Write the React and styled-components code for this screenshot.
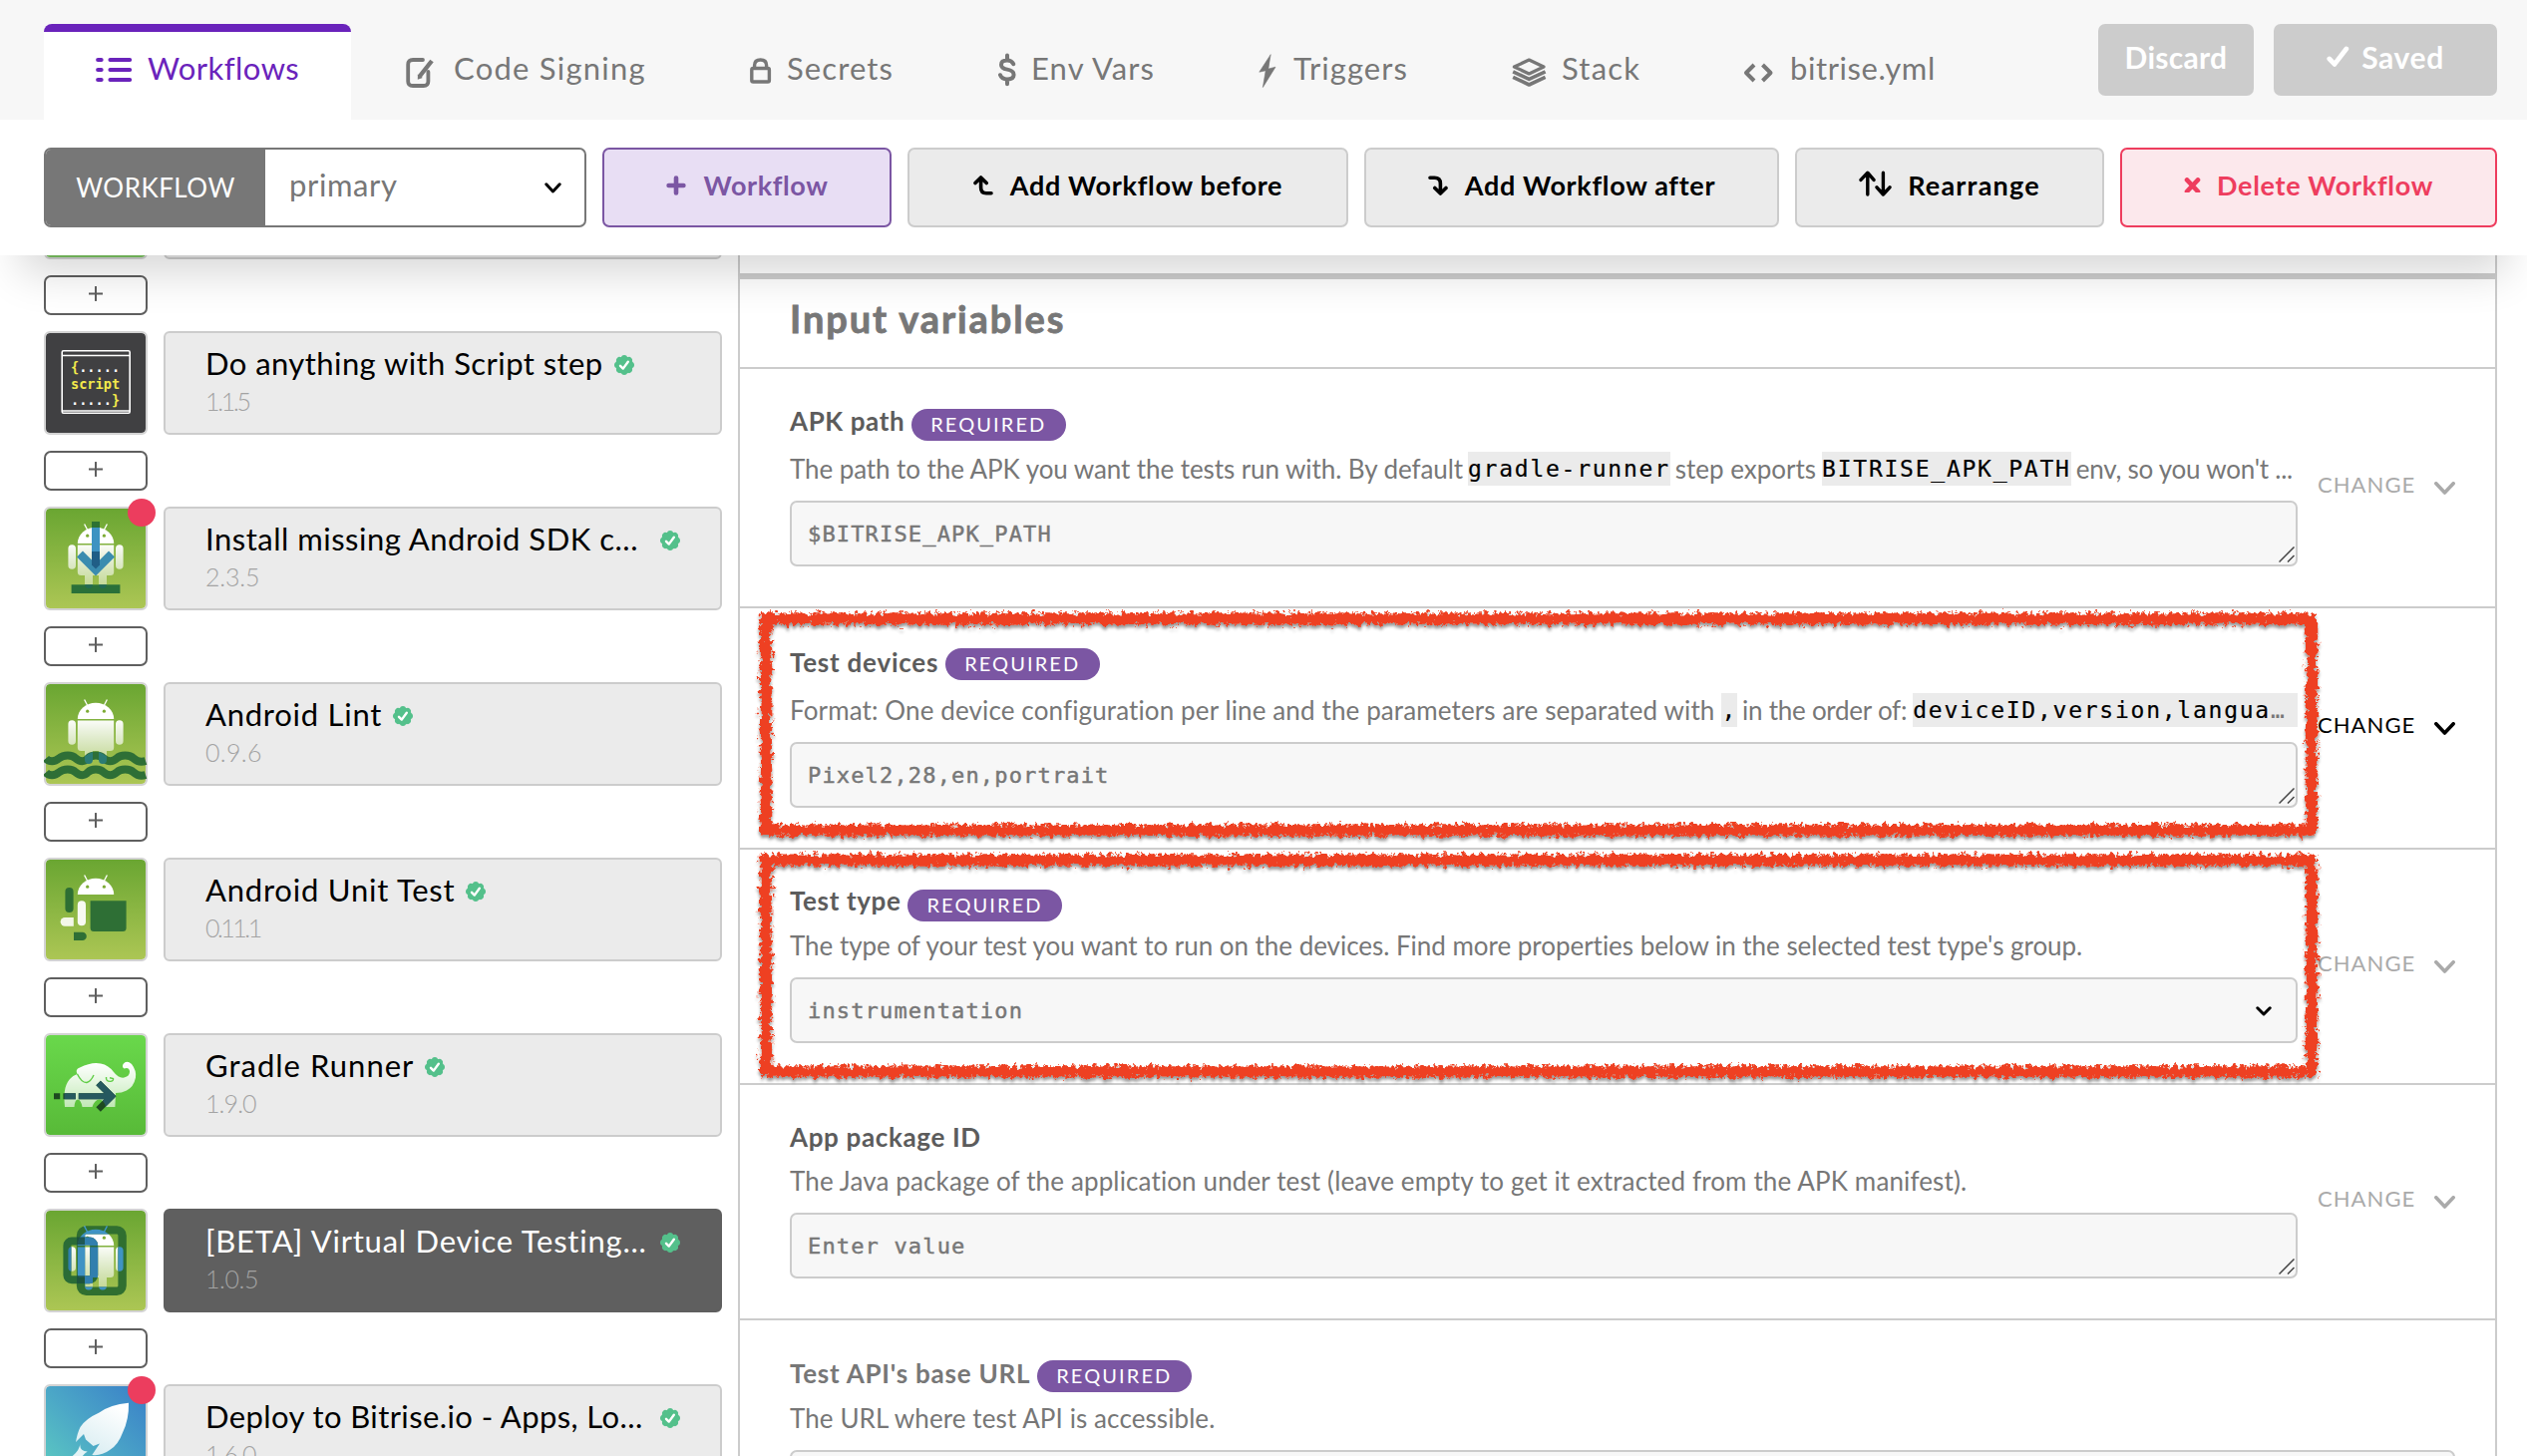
import React from "react";
import styled, { createGlobalStyle } from "styled-components";

const Global = createGlobalStyle`
  *, *::before, *::after { box-sizing: border-box; }
  body { margin: 0; background: #fff; font-family: Lato, "Open Sans", sans-serif; }
  svg { display: block; flex: none; }
`;

const Page = styled.div`
  height: 1460px;
  display: flex;
  flex-direction: column;
  overflow: hidden;
  background: #fff;
`;

/* ---------- header ---------- */

const Header = styled.header`
  position: relative;
  z-index: 2;
  flex: none;
  background: #fff;
  box-shadow: 0 38px 40px -20px rgba(0, 0, 0, 0.155);
`;

const TabBar = styled.nav`
  display: flex;
  align-items: flex-start;
  height: 120px;
  padding: 24px 30px 0 44px;
  background: #f7f7f7;
`;

const Tab = styled.a`
  display: flex;
  align-items: center;
  width: ${(p) => p.$w}px;
  height: 96px;
  margin-right: ${(p) => (p.$active ? 3 : 0)}px;
  padding: 0 0 16px 52px;
  border-top: 8px solid ${(p) => (p.$active ? "#6a23bb" : "transparent")};
  border-radius: 8px 8px 0 0;
  background: ${(p) => (p.$active ? "#fff" : "transparent")};
  color: ${(p) => (p.$active ? "#6a23bb" : "#777")};
  font-size: 31px;
  line-height: 38px;
  white-space: nowrap;
`;

const TabIcon = styled.span`
  display: block;
  flex: none;
  width: ${(p) => p.$w}px;
`;

const Label = styled.span`
  letter-spacing: ${(p) => p.$ls || 0}px;
  white-space: nowrap;
`;

const SaveActions = styled.div`
  display: flex;
  gap: 20px;
  margin-left: auto;
`;

const SaveButton = styled.button`
  display: flex;
  align-items: center;
  justify-content: center;
  gap: 12px;
  width: ${(p) => p.$w}px;
  height: 72px;
  padding: 0 0 7px;
  border: 0;
  border-radius: 7px;
  background: #ccc;
  color: #fff;
  font: 700 30px/36px Lato, sans-serif;
`;

const Toolbar = styled.div`
  display: flex;
  gap: 16px;
  height: 136px;
  padding: 28px 30px 28px 44px;
`;

const WorkflowSelect = styled.div`
  display: flex;
  width: 544px;
  height: 80px;
  border: 2px solid #777;
  border-radius: 7px;
  overflow: hidden;
`;

const SelectLabel = styled.div`
  display: flex;
  align-items: center;
  justify-content: center;
  width: 220px;
  background: #777;
  color: #fff;
  font-size: 26px;
`;

const SelectValue = styled.div`
  display: flex;
  flex: 1;
  align-items: center;
  justify-content: space-between;
  padding: 0 23px 0 24px;
  color: #777;
  font-size: 31px;
  ${Label} { padding-bottom: 7px; }
`;

const tones = {
  primary: { fg: "#7b56a3", bg: "#e8def4", line: "#7b56a3" },
  plain: { fg: "#000", bg: "#ebebeb", line: "#ccc" },
  danger: { fg: "#ee3d5e", bg: "#fce8ec", line: "#ee3d5e" },
};

const ToolButton = styled.button`
  display: flex;
  align-items: center;
  justify-content: center;
  gap: ${(p) => p.$gap || 17}px;
  width: ${(p) => p.$w}px;
  height: 80px;
  padding: 0 0 5px;
  border: 2px solid ${(p) => tones[p.$tone].line};
  border-radius: 7px;
  background: ${(p) => tones[p.$tone].bg};
  color: ${(p) => tones[p.$tone].fg};
  font: 700 27px/32px Lato, sans-serif;
`;

/* ---------- steps column ---------- */

const Content = styled.main`
  display: flex;
  flex: 1;
  align-items: flex-start;
  gap: 16px;
  min-height: 0;
  padding: 0 30px 0 44px;
`;

const Steps = styled.section`
  display: flex;
  flex: none;
  flex-direction: column;
  gap: 16px;
  width: 680px;
  margin-top: -100px;
`;

const StepRow = styled.div`
  display: flex;
  gap: 16px;
  height: 104px;
`;

const Tile = styled.div`
  position: relative;
  flex: none;
  width: 104px;
  height: 104px;
  border: 2px solid #d3d3d3;
  border-radius: 6px;
  background: ${(p) => p.$bg};
  background-clip: padding-box;
  svg { margin: -2px; }
`;

const UpdateDot = styled.span`
  position: absolute;
  top: -10px;
  right: -10px;
  width: 28px;
  height: 28px;
  border-radius: 50%;
  background: #ec3d5e;
`;

const StepCard = styled.div`
  flex: 1;
  padding: 11px 40px;
  border: 2px solid ${(p) => (p.$active ? "#5f5f5f" : "#ccc")};
  border-radius: 6px;
  background: ${(p) => (p.$active ? "#5f5f5f" : "#ebebeb")};
  color: ${(p) => (p.$active ? "#fff" : "#000")};
`;

const StepTitle = styled.div`
  display: flex;
  align-items: center;
  gap: ${(p) => (p.$cut ? 12 : 11)}px;
  font-size: 31px;
  line-height: 38px;
  ${Label} { min-width: ${(p) => (p.$cut ? "444px" : "0")}; }
  svg { margin-top: 4px; }
`;

const StepVersion = styled.div`
  color: #a3a3a3;
  font-size: 25px;
  font-weight: 300;
  line-height: 38px;
`;

const AddStep = styled.button`
  display: flex;
  align-items: center;
  justify-content: center;
  width: 104px;
  height: 40px;
  padding: 0 0 3px;
  border: 2px solid #5f5f5f;
  border-radius: 7px;
  background: #fff;
  color: #5f5f5f;
`;

/* ---------- inputs panel ---------- */

const Panel = styled.section`
  flex: 1;
  height: 1204px;
  border: solid #ccc;
  border-width: 0 2px;
`;

const PanelHead = styled.div`
  height: 24px;
  border-bottom: 6px solid #ccc;
`;

const PanelTitle = styled.h2`
  display: flex;
  align-items: center;
  height: 90px;
  margin: 0;
  padding: 0 0 11px 50px;
  border-bottom: 2px solid #ccc;
  color: #777;
  font-size: 38px;
  font-weight: 700;
  -webkit-text-stroke: 0.8px #777;
`;

const InputRow = styled.div`
  position: relative;
  display: flex;
  gap: 20px;
  height: ${(p) => p.$h}px;
  padding: 40px 40px 0 50px;
  border-bottom: 2px solid #ccc;
`;

const Field = styled.div`
  flex: none;
  width: ${(p) => (p.$wide ? 1670 : 1512)}px;
`;

const FieldTitle = styled.div`
  display: flex;
  gap: 7px;
  height: 32px;
  color: ${(p) => (p.$soft ? "#777" : "#5c5c5c")};
  font-size: 26px;
  font-weight: 700;
  line-height: ${(p) => p.$lh}px;
`;

const Required = styled.span`
  width: 155px;
  height: 32px;
  padding-left: 19px;
  border-radius: 16px;
  background: #7b56a3;
  color: #fff;
  font-size: 20px;
  font-weight: 400;
  line-height: 31px;
  letter-spacing: 2.1px;
`;

const Description = styled.div`
  display: flex;
  align-items: flex-end;
  height: ${(p) => p.$h}px;
  padding-bottom: 16px;
  color: #777;
  font-size: 26px;
  line-height: 32px;
  white-space: pre;
`;

const Code = styled.code`
  flex: ${(p) => (p.$fill ? 1 : "none")};
  height: 34px;
  margin: 0 ${(p) => (p.$fill ? 0 : 5)}px -1px ${(p) => p.$ml || 5}px;
  background: #ebebeb;
  color: #000;
  font: 23px/35px "DejaVu Sans Mono", monospace;
  letter-spacing: 1.75px;
  -webkit-text-stroke: 0.2px #000;
`;

const Ellipsis = styled.span`
  color: #777;
  -webkit-text-stroke: 0;
`;

const ValueBox = styled.div`
  position: relative;
  display: flex;
  align-items: center;
  justify-content: space-between;
  height: 66px;
  padding: 2px 24px 0 16px;
  border: 2px solid #ccc;
  border-radius: 7px;
  background: #f7f7f7;
  color: #777;
  font: 22px/30px "DejaVu Sans Mono", monospace;
  letter-spacing: 1.16px;
  -webkit-text-stroke: 0.45px #777;
`;

const Grip = styled.svg`
  position: absolute;
  right: 1px;
  bottom: 2px;
`;

const Change = styled.div`
  display: flex;
  align-items: center;
  justify-content: space-between;
  align-self: flex-start;
  width: 138px;
  height: ${(p) => p.$h}px;
  margin-top: -40px;
  color: ${(p) => (p.$on ? "#000" : "#aaa")};
  font-size: 22px;
  ${Label} { padding-bottom: 7px; }
`;

const Marker = styled.svg`
  position: absolute;
  top: 0;
  left: 10px;
  overflow: visible;
  pointer-events: none;
`;

/* ---------- icons ---------- */

const TI = ({ w, children }) => (
  <svg width={w} height="40" viewBox={`0 0 ${w} 40`} fill="none" stroke="currentColor" strokeLinecap="round" strokeLinejoin="round">
    {children}
  </svg>
);

const ListIcon = () => (
  <TI w={36}>
    <g strokeWidth="4.2">
      {[12, 22, 32].map((y) => (
        <path key={y} d={`M2.2 ${y}H5.6M14.5 ${y}H34`} />
      ))}
    </g>
  </TI>
);
const EditIcon = () => (
  <TI w={28}>
    <path strokeWidth="3.8" d="M17 12H7Q2.2 12 2.2 16.8V33.4Q2.2 38 7 38H17.6Q22.4 38 22.4 33.4V24" />
    <path strokeWidth="4.4" strokeLinecap="butt" d="M13.4 29L26 13" />
    <path stroke="none" fill="currentColor" d="M11.8 31.8L11.9 26.4L16.8 30Z" />
  </TI>
);
const LockIcon = () => (
  <TI w={22}>
    <rect x="1.8" y="20.5" width="17.6" height="13.5" rx="1.5" strokeWidth="3.4" />
    <path strokeWidth="3.4" d="M4.6 20V17.5Q4.6 12 10.6 12T16.6 17.5V20" />
  </TI>
);
const DollarIcon = () => (
  <TI w={18}>
    <path strokeWidth="4" d="M15.2 16.2Q13.5 12.6 9 12.6Q3 12.6 3 17Q3 20.6 9 21.6Q15.6 22.8 15.6 27Q15.6 31.4 9 31.4Q3.4 31.4 2 27.2M9 7.5V12M9 32V36.3" />
  </TI>
);
const BoltIcon = () => (
  <TI w={18}>
    <path strokeWidth="0.6" fill="currentColor" d="M12 7L.8 24.2L7.2 22.8L4.4 39.5L17 19.2L10 21Z" />
  </TI>
);
const LayersIcon = () => (
  <TI w={35}>
    <g strokeWidth="3.2">
      <path d="M17.3 12L32 19L17.3 26L2.4 19Z" />
      <path strokeLinecap="butt" strokeWidth="3.6" d="M1.2 23.8L17.3 31.4L33.6 23.8M1.2 29.4L17.3 37L33.6 29.4" />
    </g>
  </TI>
);
const CodeIcon = () => (
  <TI w={31}>
    <path strokeWidth="4" strokeLinecap="butt" d="M11 17L3 25L11 33M19.5 17L27.5 25L19.5 33" />
  </TI>
);
const CheckIcon = () => (
  <svg width="23" height="22" viewBox="0 0 23 22">
    <path fill="none" stroke="#fff" strokeWidth="4.8" strokeLinecap="round" strokeLinejoin="round" d="M2.8 13L8 18.4L19.8 3" />
  </svg>
);
const Glyph = ({ w = 20, h = 20, sw = 4, d }) => (
  <svg width={w} height={h} viewBox={`0 0 ${w} ${h}`} fill="none" stroke="currentColor" strokeWidth={sw} strokeLinecap="round" strokeLinejoin="round">
    <path d={d} />
  </svg>
);
const Chevron = ({ w = 16, h = 10, sw = 3, color = "currentColor" }) => (
  <svg width={w} height={h} viewBox={`0 0 ${w} ${h}`}>
    <path fill="none" stroke={color} strokeWidth={sw} strokeLinecap="round" strokeLinejoin="round" d={`M1.8 1.8L${w / 2} ${h - 2}L${w - 1.8} 1.8`} />
  </svg>
);
const Verified = () => (
  <svg width="20" height="20" viewBox="0 0 20 20">
    <g fill="#54c08b">
      <circle cx="10" cy="10" r="8.8" />
      {[0, 45, 90, 135, 180, 225, 270, 315].map((a) => (
        <circle key={a} cx="10" cy="3" r="3" transform={`rotate(${a} 10 10)`} />
      ))}
    </g>
    <path fill="none" stroke="#fff" strokeWidth="2.4" strokeLinecap="round" strokeLinejoin="round" d="M6 10.8L8.8 13.6L13.8 6.8" />
  </svg>
);

/* ---------- step artwork ---------- */

const Art = ({ children }) => (
  <svg width="104" height="104" viewBox="0 0 104 104">
    <defs>
      <linearGradient id="robot" x1="0" y1="36" x2="0" y2="84" gradientUnits="userSpaceOnUse">
        <stop offset="0" stopColor="#fff" />
        <stop offset="1" stopColor="#fff" stopOpacity=".35" />
      </linearGradient>
    </defs>
    {children}
  </svg>
);

const HEAD = "M33.8 37A18.2 16.2 0 0 1 70.2 37Z";
const BODY =
  "M33.8 38.6H70.2V65.5Q70.2 69 66.7 69H63V77.5A4 4 0 0 1 55 77.5V69H49V77.5A4 4 0 0 1 41 77.5V69H37.3Q33.8 69 33.8 65.5Z" +
  "M24.4 42A3.8 3.8 0 0 1 32 42V59A3.8 3.8 0 0 1 24.4 59ZM72 42A3.8 3.8 0 0 1 79.6 42V59A3.8 3.8 0 0 1 72 59Z";

const RobotHead = () => (
  <g>
    <path fill="#fff" d={HEAD} />
    <path stroke="#fff" strokeWidth="1.3" d="M40.6 17.5L44.5 25M63.4 17.5L59.5 25" />
    <circle cx="43.7" cy="29.2" r="1.6" fill="#7dac35" />
    <circle cx="60.4" cy="29.2" r="1.6" fill="#7dac35" />
  </g>
);
const Robot = () => (
  <g>
    <RobotHead />
    <path fill="url(#robot)" d={BODY} />
  </g>
);

const ScriptArt = () => (
  <Art>
    <rect x="18.2" y="19.8" width="68" height="62.5" fill="none" stroke="#fff" strokeWidth="1.6" rx="1.5" />
    <path stroke="#fff" strokeWidth="1.5" d="M18 24.6H86M18 80H86" />
    <g fontFamily="DejaVu Sans Mono, monospace" fontSize="13.6" fontWeight="700" fill="#f3e94b">
      <text x="27" y="41">{"{"}<tspan fill="#fff">.....</tspan></text>
      <text x="27" y="57.5">script</text>
      <text x="27" y="74"><tspan fill="#fff">.....</tspan>{"}"}</text>
    </g>
  </Art>
);
const InstallArt = () => (
  <Art>
    <Robot />
    <path fill="#2d7233" d="M48 15H56V22H48Z" />
    <path fill="#3e93c2" d="M48 21H56V48H48Z" />
    <path fill="none" stroke="#3a8caf" strokeWidth="8.4" d="M36 47.5L52 63.5L68 47.5" />
    <path fill="#205e86" d="M48 45H56V58.5L52 62.5L48 58.5Z" />
    <path fill="#2a7039" d="M27.6 78.2H76.4V87H27.6Z" />
    <path fill="#236a55" d="M41 78.2H49Q48.5 82 45 82T41 78.2ZM55 78.2H63Q62.5 82 59 82T55 78.2Z" />
  </Art>
);
const LintArt = () => (
  <Art>
    <Robot />
    <g fill="none" stroke="#2e6f36" strokeWidth="8">
      <path d="M2 76.5C5 80 11 80 15 76.5C20 72.5 28 72.5 32 76.5C36 80 41 80 44 76.5C48 72.5 56 72.5 60 76.5C64 80 69 80 73 76.5C77 72.5 86 72.5 90 76.5C94 80 99 80 102 79" />
      <path d="M2 90.5C5 94 11 94 15 90.5C20 86.5 28 86.5 32 90.5C36 94 41 94 44 90.5C48 86.5 56 86.5 60 90.5C64 94 69 94 73 90.5C77 86.5 86 86.5 90 90.5C94 94 99 94 102 93" />
    </g>
    <path fill="#2b7b74" d="M41 74.5Q45 71 49 70V78A4 4 0 0 1 41 78ZM55 70Q59 71 63 74.5V78A4 4 0 0 1 55 78Z" />
  </Art>
);
const UnitArt = () => (
  <Art>
    <RobotHead />
    <rect x="21.4" y="30" width="8.2" height="25" rx="4.1" fill="#2e6f33" />
    <rect x="33.8" y="43.3" width="8.2" height="25" rx="4.1" fill="#f8faf2" />
    <path fill="#2e6f35" d="M46.6 43.3H82.6V70.5Q82.6 74 79 74H50Q46.6 74 46.6 70.5Z" />
    <path fill="#f3f7e8" d="M29.8 60V68.7H21A4.3 4.3 0 0 1 21 60Z" />
    <path fill="#2e6f35" d="M30 74.7H38.6A4.2 4.2 0 0 1 38.6 83.1H30Z" />
  </Art>
);
const ELEPHANT =
  "M21 74C20 62 20 53 26 46Q29 42.5 33.5 41Q31 36 36 34.5Q48 28.5 57 30.5Q65 32 70 39Q75 45.5 80.5 44.5Q86.5 43 86 38Q85 33.5 80.5 35.5Q78 34 79.5 31Q83 26.5 88 31Q93 37.5 92 44.5Q90 54 83 57.5Q78 60 72 60L71.4 74H62Q60 66.5 55.5 66.5T48.5 74H38.5Q37 66.5 34 66.5T30.5 74Z";
const GradleArt = () => (
  <Art>
    <defs>
      <linearGradient id="gradle" x1="0" y1="30" x2="0" y2="76" gradientUnits="userSpaceOnUse">
        <stop offset="0" stopColor="#fff" />
        <stop offset="1" stopColor="#fff" stopOpacity=".6" />
      </linearGradient>
      <clipPath id="elephant"><path d={ELEPHANT} /></clipPath>
    </defs>
    <path fill="url(#gradle)" d={ELEPHANT} />
    <path fill="none" stroke="#5fcd45" strokeWidth="1.4" d="M33.5 41Q38 50 43 49.5Q47 48.5 50 42M62.5 44Q62 48.5 66.5 48.4Q70 48 69.5 45.5L66 44.8" />
    {["#1d4a1f", "#26595f"].map((c, i) => (
      <g key={c} clipPath={i ? "url(#elephant)" : undefined}>
        <path fill={c} d="M10 60.3H16.2V66.3H10ZM19.4 60.3H31.8V66.3H19.4ZM34.8 60.3H66V66.3H34.8Z" />
        <path fill="none" stroke={c} strokeWidth="6.4" d="M54.6 50L68 63.3L54.6 76.6" />
      </g>
    ))}
  </Art>
);
const Frames = ({ a, b }) => (
  <g fill="none">
    <rect x="37" y="21.4" width="41.6" height="61.4" rx="5.5" stroke={a} strokeWidth="8.4" />
    <rect x="23.4" y="32.4" width="26.8" height="38.8" rx="4.5" stroke={b} strokeWidth="8" />
  </g>
);
const DeviceArt = () => (
  <Art>
    <defs>
      <clipPath id="bot"><path d={HEAD + BODY} /></clipPath>
    </defs>
    <Robot />
    <Frames a="#306f30" b="#2a6c36" />
    <g clipPath="url(#bot)">
      <Frames a="#3f93c4" b="#317fae" />
    </g>
    <path fill="#1c4f3f" d="M33 28.5H41V36H33ZM33 67.3H41V75H33Z" opacity=".8" />
    <path stroke="#3f97cd" strokeWidth="1.4" d="M40.6 17.5L44.5 25M63.4 17.5L59.5 25" />
  </Art>
);
const RocketArt = () => (
  <Art>
    <defs>
      <linearGradient id="hull" x1="70" y1="20" x2="40" y2="75" gradientUnits="userSpaceOnUse">
        <stop offset="0" stopColor="#fff" />
        <stop offset="1" stopColor="#d4ebf0" />
      </linearGradient>
    </defs>
    <path fill="url(#hull)" d="M85 18.7Q66 20.5 55.5 28.5Q42 34.5 36.5 43Q33.5 49 32 58L40 50L42 55.5L49.5 62L56 59.5L48.3 71Q58 72 66 66Q74.5 61 79 48.5Q85.5 35 85 18.7Z" />
    <path fill="#e3f3f5" d="M36.5 59Q35 67 43.7 67.6Q38 71 36 78L20 90Q26 78 28.7 72Q36 66 36.5 59Z" />
  </Art>
);

const GREEN = "linear-gradient(#6aa632, #acc654)";
const steps = [
  { bg: "#7cc562", art: null, title: "", version: "" },
  { bg: "#404042", art: <ScriptArt />, title: "Do anything with Script step", ls: 0.43, version: "1.1.5", vls: -2.3 },
  { bg: GREEN, art: <InstallArt />, title: "Install missing Android SDK c...", ls: 0.5, version: "2.3.5", vls: -0.17, cut: true, dot: true },
  { bg: GREEN, art: <LintArt />, title: "Android Lint", ls: 0.75, version: "0.9.6", vls: 0.33 },
  { bg: GREEN, art: <UnitArt />, title: "Android Unit Test", ls: 0.78, version: "0.11.1", vls: -2.5 },
  { bg: "linear-gradient(#69d84b, #58ba38)", art: <GradleArt />, title: "Gradle Runner", ls: 1.02, version: "1.9.0", vls: -0.9 },
  { bg: GREEN, art: <DeviceArt />, title: "[BETA] Virtual Device Testing...", ls: 0.77, version: "1.0.5", vls: -0.42, cut: true, active: true },
  { bg: "linear-gradient(225deg, #3b83c8 5%, #4ba6c7 50%, #5fd0c0)", art: <RocketArt />, title: "Deploy to Bitrise.io - Apps, Lo...", ls: 0.4, version: "1.6.0", vls: -0.9, cut: true, dot: true },
];

const tabs = [
  { w: 308, iw: 52, icon: <ListIcon />, text: "Workflows", ls: 0.45, active: true },
  { w: 345, iw: 48, icon: <EditIcon />, text: "Code Signing", ls: 1.24 },
  { w: 249, iw: 37, icon: <LockIcon />, text: "Secrets", ls: 1.1 },
  { w: 261, iw: 33, icon: <DollarIcon />, text: "Env Vars", ls: 1.1 },
  { w: 254, iw: 35, icon: <BoltIcon />, text: "Triggers", ls: 1.06 },
  { w: 232, iw: 50, icon: <LayersIcon />, text: "Stack", ls: 1.2 },
  { w: 260, iw: 47, icon: <CodeIcon />, text: "bitrise.yml", ls: 0.59 },
];

/* Hand-brushed highlight frame drawn round a field. */
const Brush = ({ seed }) => (
  <Marker width="1584" height="246" viewBox="0 0 1584 246">
    <defs>
      <filter id={`brush${seed}`} x="0" y="0" width="1584" height="246" filterUnits="userSpaceOnUse">
        <feTurbulence type="fractalNoise" baseFrequency="0.22" numOctaves="3" seed={seed} result="n" />
        <feDisplacementMap in="SourceGraphic" in2="n" scale="11" xChannelSelector="R" yChannelSelector="G" result="d" />
        <feDropShadow in="d" dx="0" dy="3" stdDeviation="1.6" floodColor="#000" floodOpacity=".4" />
      </filter>
    </defs>
    <g filter={`url(#brush${seed})`}>
      <rect x="16" y="10.5" width="1550" height="212" fill="none" stroke="#ee4023" strokeWidth="10" />
      <rect x="16" y="10.5" width="1550" height="212" fill="none" stroke="#ee4023" strokeWidth="12.5" strokeDasharray="3 2 7 3 2 4" />
    </g>
  </Marker>
);

const GripLines = () => (
  <Grip width="16" height="16" viewBox="0 0 16 16">
    <path fill="none" stroke="#444" strokeWidth="1.5" d="M.5 15.5L15.5 .5M9 15.5L15.5 9" />
  </Grip>
);

const FieldRow = ({ h, title, tls, lh, required, soft, desc, dh, value, select, wide, on, marker }) => (
  <InputRow $h={h}>
    <Field $wide={wide}>
      <FieldTitle $lh={lh} $soft={soft}>
        <Label $ls={tls}>{title}</Label>
        {required && <Required>REQUIRED</Required>}
      </FieldTitle>
      <Description $h={dh}>{desc}</Description>
      <ValueBox>
        {value}
        {select ? <Chevron color="#000" /> : <GripLines />}
      </ValueBox>
    </Field>
    {!wide && (
      <Change $h={h - 2} $on={on}>
        <Label $ls={1.05}>CHANGE</Label>
        <Chevron w={21} h={13} sw={3.6} />
      </Change>
    )}
    {marker}
  </InputRow>
);

export default function App() {
  return (
    <Page>
      <Global />
      <Header>
        <TabBar>
          {tabs.map((t) => (
            <Tab key={t.text} $w={t.w} $active={t.active}>
              <TabIcon $w={t.iw}>{t.icon}</TabIcon>
              <Label $ls={t.ls}>{t.text}</Label>
            </Tab>
          ))}
          <SaveActions>
            <SaveButton $w={156}><Label $ls={0.28}>Discard</Label></SaveButton>
            <SaveButton $w={224}><CheckIcon /><Label $ls={0.6}>Saved</Label></SaveButton>
          </SaveActions>
        </TabBar>
        <Toolbar>
          <WorkflowSelect>
            <SelectLabel><Label $ls={0.5}>WORKFLOW</Label></SelectLabel>
            <SelectValue><Label $ls={0.62}>primary</Label><Chevron color="#000" w={17} h={11} /></SelectValue>
          </WorkflowSelect>
          <ToolButton $w={290} $tone="primary" $gap={18}>
            <Glyph sw={4.6} d="M10 2.6V17.4M2.6 10H17.4" />
            <Label $ls={0.6}>Workflow</Label>
          </ToolButton>
          <ToolButton $w={442} $tone="plain" $gap={17}>
            <Glyph sw={3.6} d="M2 7.6L7.6 2L13.2 7.6M7.6 3V12Q7.6 17.8 13 17.8H18" />
            <Label $ls={0.7}>Add Workflow before</Label>
          </ToolButton>
          <ToolButton $w={416} $tone="plain" $gap={17}>
            <Glyph sw={3.6} d="M2 2.2H6.5Q12.4 2.2 12.4 8V17M6.8 12.4L12.4 18L18 12.4" />
            <Label $ls={0.68}>Add Workflow after</Label>
          </ToolButton>
          <ToolButton $w={310} $tone="plain" $gap={16}>
            <Glyph w={33} h={30} sw={3.4} d="M8.8 24V2.4M2 9.4L8.8 2.2L15 9.4M24.4 2.2V24M18 16.8L24.4 24L31 16.8" />
            <Label $ls={1.2}>Rearrange</Label>
          </ToolButton>
          <ToolButton $w={378} $tone="danger" $gap={16}>
            <Glyph w={17} h={15} sw={4.6} d="M3 2.4L14 14M14 2.4L3 14" />
            <Label $ls={0.7}>Delete Workflow</Label>
          </ToolButton>
        </Toolbar>
      </Header>

      <Content>
        <Steps>
          {steps.map((s, i) => (
            <React.Fragment key={i}>
              <StepRow>
                <Tile $bg={s.bg}>
                  {s.art}
                  {s.dot && <UpdateDot />}
                </Tile>
                <StepCard $active={s.active}>
                  {s.title && (
                    <>
                      <StepTitle $cut={s.cut}><Label $ls={s.ls}>{s.title}</Label><Verified /></StepTitle>
                      <StepVersion><Label $ls={s.vls}>{s.version}</Label></StepVersion>
                    </>
                  )}
                </StepCard>
              </StepRow>
              {i < steps.length - 1 && (
                <AddStep aria-label="Add step">
                  <Glyph w={14} h={15} sw={2} d="M7 .8V14.2M.5 7.5H13.5" />
                </AddStep>
              )}
            </React.Fragment>
          ))}
        </Steps>

        <Panel>
          <PanelHead />
          <PanelTitle><Label $ls={1.9}>Input variables</Label></PanelTitle>
          <FieldRow
            h={240} title="APK path" tls={0.6} lh={24} required dh={60} value="$BITRISE_APK_PATH"
            desc={<>
              <Label $ls={-0.08}>The path to the APK you want the tests run with. By default</Label>
              <Code>gradle-runner</Code>
              <Label>step exports</Label>
              <Code $ml={6}>BITRISE_APK_PATH</Code>
              <Label $ls={-0.24}>env, so you won't ...</Label>
            </>}
          />
          <FieldRow
            h={242} title="Test devices" tls={0.76} lh={28} required dh={62} value="Pixel2,28,en,portrait" on
            marker={<Brush seed={4} />}
            desc={<>
              <Label $ls={0.12}>Format: One device configuration per line and the parameters are separated with</Label>
              <Code $ml={7}>,</Code>
              <Label $ls={-0.26}>in the order of:</Label>
              <Code $ml={6} $fill>deviceID,version,langua<Ellipsis>…</Ellipsis></Code>
            </>}
          />
          <FieldRow
            h={236} title="Test type" tls={0.63} lh={23} required dh={56} value="instrumentation" select
            marker={<Brush seed={9} />}
            desc={<Label $ls={-0.03}>The type of your test you want to run on the devices. Find more properties below in the selected test type's group.</Label>}
          />
          <FieldRow
            h={236} title="App package ID" tls={0.65} lh={24} dh={56} value="Enter value"
            desc={<Label $ls={0.13}>The Java package of the application under test (leave empty to get it extracted from the APK manifest).</Label>}
          />
          <FieldRow
            h={236} title="Test API's base URL" tls={0.76} lh={27} required soft dh={58} value="" wide
            desc={<Label $ls={0.09}>The URL where test API is accessible.</Label>}
          />
        </Panel>
      </Content>
    </Page>
  );
}
